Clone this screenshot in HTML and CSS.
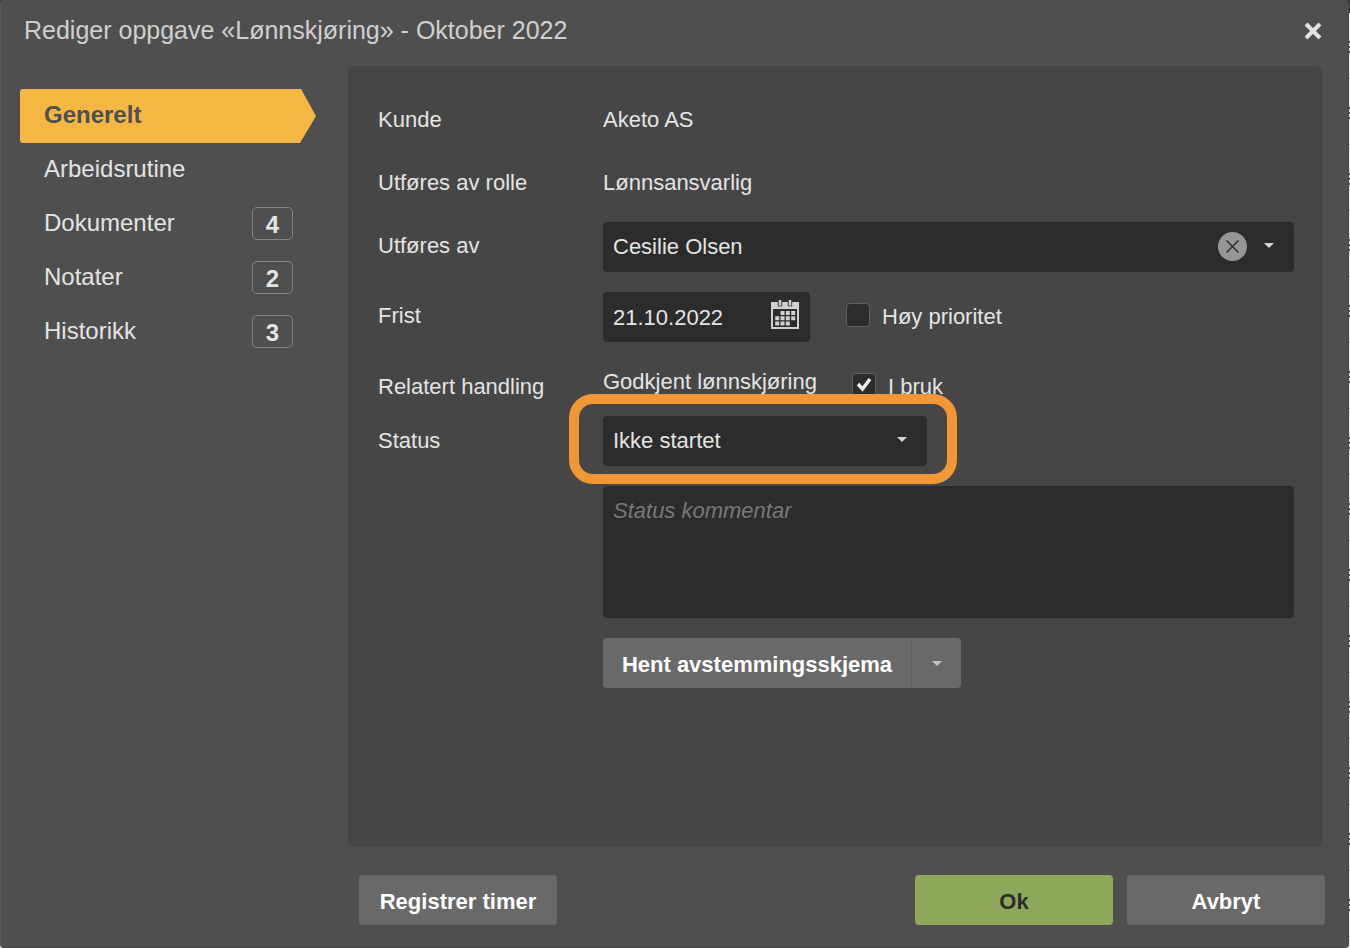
FILE: index.html
```html
<!DOCTYPE html>
<html lang="no">
  <head>
    <meta charset="UTF-8" />
    <meta name="viewport" content="width=device-width, initial-scale=1.0" />
    <title>Rediger oppgave</title>
    <link rel="stylesheet" href="styles.css">
  </head>
  <body>
    <div class="dialog" role="dialog" aria-labelledby="dialog-title">
      <header class="dialog-header">
        <h1 id="dialog-title">Rediger oppgave «Lønnskjøring» - Oktober 2022</h1>
        <button type="button" class="close" aria-label="Lukk">
          <svg width="20" height="20" viewBox="0 0 20 20">
            <path d="M3 3L17 17M17 3L3 17" stroke="#e2e2e2" stroke-width="4" />
          </svg>
        </button>
      </header>

      <div class="dialog-body">
        <nav class="tabs">
          <a href="#generelt" class="tab active">Generelt</a>
          <a href="#arbeidsrutine" class="tab">Arbeidsrutine</a>
          <a href="#dokumenter" class="tab">Dokumenter <span class="count">4</span></a>
          <a href="#notater" class="tab">Notater <span class="count">2</span></a>
          <a href="#historikk" class="tab">Historikk <span class="count">3</span></a>
        </nav>

        <form class="panel" id="generelt">
          <div class="row static">
            <span class="label">Kunde</span>
            <span class="value">Aketo AS</span>
          </div>
          <div class="row static">
            <span class="label">Utføres av rolle</span>
            <span class="value">Lønnsansvarlig</span>
          </div>
          <div class="row">
            <label class="label" for="user">Utføres av</label>
            <div class="select">
              <select id="user">
                <option>Cesilie Olsen</option>
              </select>
              <button type="button" class="clear" aria-label="Fjern">
                <svg width="29" height="29" viewBox="0 0 29 29">
                  <circle cx="14.5" cy="14.5" r="14.5" fill="#969696" />
                  <path d="M8.5 8.5L20.5 20.5M20.5 8.5L8.5 20.5" stroke="#2c2c2c" stroke-width="1.5" />
                </svg>
              </button>
              <svg class="caret" width="10" height="5" viewBox="0 0 10 5"><path d="M0 0H10L5 5Z" fill="#d4d4d4" /></svg>
            </div>
          </div>
          <div class="row">
            <label class="label" for="deadline">Frist</label>
            <div class="date">
              <input type="text" id="deadline" value="21.10.2022" />
              <button type="button" class="calendar" aria-label="Velg dato">
                <svg width="28" height="29" viewBox="0 0 28 29">
                  <path d="M0 2H28V9H0Z" fill="#d0d0d0" />
                  <path d="M1 8V28H27V8" fill="none" stroke="#d0d0d0" stroke-width="2" />
                  <path d="M9 0V6.500M19 0V6.500" stroke="#5a5a5a" stroke-width="4.500" />
                  <path d="M9 0V5.500M19 0V5.500" stroke="#d0d0d0" stroke-width="2" />
                  <g fill="#d0d0d0">
                    <path d="M9.500 11h4v4h-4zM14.800 11h4v4h-4zM20.200 11h4v4h-4z" />
                    <path d="M4.200 16.300h4v4h-4zM9.500 16.300h4v4h-4zM14.800 16.300h4v4h-4zM20.200 16.300h4v4h-4z" />
                    <path d="M4.200 21.500h4v4h-4zM9.500 21.500h4v4h-4zM14.800 21.500h4v4h-4z" />
                  </g>
                </svg>
              </button>
            </div>
            <label class="check priority"><input type="checkbox" /> Høy prioritet</label>
          </div>
          <div class="row related">
            <span class="label">Relatert handling</span>
            <span class="value">Godkjent lønnskjøring</span>
            <label class="check"><input type="checkbox" checked /> I bruk</label>
          </div>
          <div class="row">
            <label class="label low" for="status">Status</label>
            <div class="select status">
              <select id="status">
                <option>Ikke startet</option>
              </select>
              <svg class="caret" width="10" height="5" viewBox="0 0 10 5"><path d="M0 0H10L5 5Z" fill="#d4d4d4" /></svg>
            </div>
          </div>
          <div class="row indent">
            <textarea placeholder="Status kommentar" aria-label="Status kommentar"></textarea>
          </div>
          <div class="row indent">
            <button type="button" class="btn split-main">Hent avstemmingsskjema</button>
            <button type="button" class="btn split-arrow" aria-label="Flere valg">
              <svg width="10" height="5" viewBox="0 0 10 5"><path d="M0 0H10L5 5Z" fill="#c4c4c4" /></svg>
            </button>
          </div>
        </form>
      </div>

      <footer class="dialog-footer">
        <button type="button" class="btn register">Registrer timer</button>
        <button type="submit" form="generelt" class="btn ok">Ok</button>
        <button type="button" class="btn">Avbryt</button>
      </footer>
    </div>
  </body>
</html>
```

FILE: styles.css
```css
* {
  box-sizing: border-box;
}
body {
  margin: 0;
  padding-right: 1px;
  font-family: "Liberation Sans", Arial, sans-serif;
  font-size: 22px;
  line-height: 26px;
  color: #e4e4e4;
  /* dark top bar with the task list showing behind the dialog */
  background:
    linear-gradient(#3c3c3c, #3c3c3c) 0 0 / 100% 13px no-repeat,
    linear-gradient(#e8e8e4 28px, #555 28px 30px, #e8e8e4 30px 33px, #555 33px 35px, #e8e8e4 35px 38px, #555 38px 40px, #e8e8e4 40px 65px, #c8c8c8 65px) 0 13px / 100% 66px;
}
button,
input,
select,
textarea {
  font: inherit;
  color: inherit;
  margin: 0;
  border: 0;
}
button {
  padding: 0;
  background: none;
  cursor: pointer;
}
svg {
  display: block;
}

.dialog {
  display: flex;
  flex-direction: column;
  min-height: 100vh;
  background-color: #4f4f4f;
  border-left: 1px solid #575757;
  border-right: 1px solid #484848;
  border-bottom: 1px solid #484848;
  border-radius: 4px;
}
.dialog-header {
  display: flex;
  justify-content: space-between;
  align-items: center;
  height: 66px;
  padding: 0 25px 5px 23px;
}
h1 {
  margin: 0;
  padding-bottom: 2px;
  font-size: 25px;
  font-weight: normal;
  color: #cfcfcf;
}
.dialog-body {
  display: flex;
  flex: 1;
  padding: 0 26px 0 19px;
}

/* Left menu */
.tabs {
  flex: none;
  width: 296px;
  margin-right: 32px;
  padding-top: 23px;
}
.tab {
  display: flex;
  justify-content: space-between;
  align-items: center;
  height: 54px;
  padding: 0 23px 2px 24px;
  font-size: 24px;
  color: #e4e4e4;
  text-decoration: none;
}
.tab.active {
  font-weight: bold;
  color: #4f4f4f;
  background-color: #f5b743;
  border-radius: 3px 0 0 3px;
  clip-path: polygon(0 0, calc(100% - 15px) 0, 100% 50%, calc(100% - 16px) 100%, 0 100%);
}
.count {
  width: 41px;
  height: 33px;
  border: 1px solid #858585;
  border-radius: 5px;
  font-weight: bold;
  line-height: 33px;
  text-align: center;
}

/* Form */
.panel {
  flex: 1;
  min-width: 0;
  padding: 30px 28px 30px 30px;
  background-color: #464646;
  border-radius: 4px;
}
.row {
  display: flex;
  margin-bottom: 20px;
}
.row.static {
  margin-bottom: 0;
  padding-bottom: 26px;
}
.row.indent {
  padding-left: 225px;
}
.label {
  flex: none;
  width: 225px;
  padding-top: 11px;
}
.label.low,
.related .label {
  padding-top: 12px;
}
.value {
  padding-top: 11px;
}
.row.related {
  height: 54px;
  margin-bottom: 0;
}
.related .value {
  width: 249px;
  padding-top: 7px;
}
.select {
  position: relative;
  flex: 1;
}
select,
.date,
textarea {
  width: 100%;
  background-color: #2c2c2c;
  border-radius: 4px;
}
select {
  display: block;
  height: 50px;
  padding: 0 80px 0 10px;
  appearance: none;
}
.caret {
  position: absolute;
  top: 21px;
  right: 20px;
  pointer-events: none;
}
.clear {
  position: absolute;
  top: 10px;
  right: 47px;
}
.select.status {
  flex: none;
  width: 324px;
}
/* Highlight around the status field */
.status::after {
  content: "";
  position: absolute;
  inset: -22px -30px -18px -34px;
  border: 10px solid #f19736;
  border-radius: 24px;
  pointer-events: none;
}
.date {
  display: flex;
  width: 207px;
  height: 50px;
  padding: 0 11px 0 10px;
}
.date input {
  flex: 1;
  min-width: 0;
  padding: 2px 0 0;
  background: none;
}
.calendar {
  align-self: flex-start;
  padding-top: 8px;
}
.check {
  display: flex;
  align-items: flex-start;
  gap: 12px;
  padding-top: 11px;
  line-height: 28px;
}
.check.priority {
  margin-left: 36px;
}
.check input {
  width: 24px;
  height: 24px;
  appearance: none;
  background-color: #2c2c2c;
  border: 1px solid #5e5e5e;
  border-radius: 4px;
}
.check input:checked {
  background: #2c2c2c url("data:image/svg+xml,%3Csvg xmlns='http://www.w3.org/2000/svg' viewBox='0 0 22 22'%3E%3Cpath d='M5 10L9.500 15L17 5' fill='none' stroke='%23ececec' stroke-width='3.500'/%3E%3C/svg%3E") center / 22px no-repeat;
}
textarea {
  display: block;
  height: 132px;
  padding: 12px 10px;
  resize: none;
}
textarea::placeholder {
  font-style: italic;
  color: #787878;
}

.btn {
  width: 198px;
  height: 50px;
  padding-top: 4px;
  background-color: #696969;
  border-radius: 4px;
  font-weight: bold;
  color: #fff;
}
.split-main {
  width: 308px;
  border-radius: 4px 0 0 4px;
}
.split-arrow {
  display: flex;
  align-items: center;
  justify-content: center;
  width: 50px;
  padding-top: 0;
  border-left: 1px solid #5e5e5e;
  border-radius: 0 4px 4px 0;
}
.dialog-footer {
  display: flex;
  gap: 14px;
  padding: 28px 23px 22px 358px;
}
.btn.register {
  margin-right: auto;
}
.btn.ok {
  background-color: #8da859;
  color: #2c2c2c;
}
```
